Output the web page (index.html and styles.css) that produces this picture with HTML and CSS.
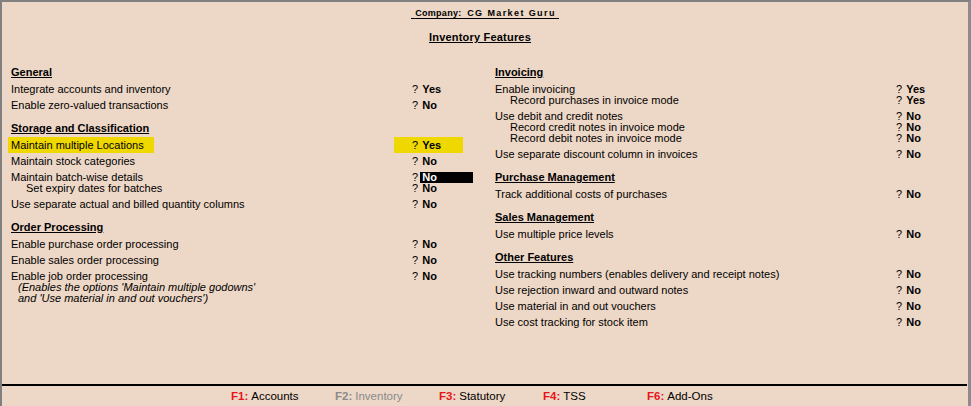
FILE: index.html
```html
<!DOCTYPE html>
<html lang="en">
<head>
    <meta charset="UTF-8">
    <title>Inventory Features</title>
    <link rel="stylesheet" href="styles.css">
</head>
<body>
    <div class="window">
        <div class="header">
            <div class="company"><span class="company-name">Company:&nbsp; <span class="company-title">CG Market Guru</span></span></div>
            <div class="title">Inventory Features</div>
        </div>

        <div class="columns">
            <div class="column">
                <div class="heading">General</div>
                <div class="row"><span class="label">Integrate accounts and inventory</span><span class="value">? <b>Yes</b></span></div>
                <div class="row"><span class="label">Enable zero-valued transactions</span><span class="value">? <b>No</b></span></div>

                <div class="heading">Storage and Classification</div>
                <div class="row"><span class="label"><span class="mark mark-label">Maintain multiple Locations</span></span><span class="value"><span class="mark mark-value">? <b>Yes</b></span></span></div>
                <div class="row"><span class="label">Maintain stock categories</span><span class="value">? <b>No</b></span></div>
                <div class="row"><span class="label">Maintain batch-wise details</span><span class="value">? <b class="current">No</b></span></div>
                <div class="row sub"><span class="label">Set expiry dates for batches</span><span class="value">? <b>No</b></span></div>
                <div class="row"><span class="label">Use separate actual and billed quantity columns</span><span class="value">? <b>No</b></span></div>

                <div class="heading">Order Processing</div>
                <div class="row"><span class="label">Enable purchase order processing</span><span class="value">? <b>No</b></span></div>
                <div class="row"><span class="label">Enable sales order processing</span><span class="value">? <b>No</b></span></div>
                <div class="row"><span class="label">Enable job order processing</span><span class="value">? <b>No</b></span></div>
                <div class="note">(Enables the options 'Maintain multiple godowns'</div>
                <div class="note">and 'Use material in and out vouchers')</div>
            </div>

            <div class="column">
                <div class="heading">Invoicing</div>
                <div class="row"><span class="label">Enable invoicing</span><span class="value">? <b>Yes</b></span></div>
                <div class="row sub"><span class="label">Record purchases in invoice mode</span><span class="value">? <b>Yes</b></span></div>
                <div class="row"><span class="label">Use debit and credit notes</span><span class="value">? <b>No</b></span></div>
                <div class="row sub"><span class="label">Record credit notes in invoice mode</span><span class="value">? <b>No</b></span></div>
                <div class="row sub"><span class="label">Record debit notes in invoice mode</span><span class="value">? <b>No</b></span></div>
                <div class="row"><span class="label">Use separate discount column in invoices</span><span class="value">? <b>No</b></span></div>

                <div class="heading">Purchase Management</div>
                <div class="row"><span class="label">Track additional costs of purchases</span><span class="value">? <b>No</b></span></div>

                <div class="heading">Sales Management</div>
                <div class="row"><span class="label">Use multiple price levels</span><span class="value">? <b>No</b></span></div>

                <div class="heading">Other Features</div>
                <div class="row"><span class="label">Use tracking numbers (enables delivery and receipt notes)</span><span class="value">? <b>No</b></span></div>
                <div class="row"><span class="label">Use rejection inward and outward notes</span><span class="value">? <b>No</b></span></div>
                <div class="row"><span class="label">Use material in and out vouchers</span><span class="value">? <b>No</b></span></div>
                <div class="row"><span class="label">Use cost tracking for stock item</span><span class="value">? <b>No</b></span></div>
            </div>
        </div>

        <div class="footer">
            <div class="key"><span class="fkey">F1:</span>Accounts</div>
            <div class="key disabled"><span class="fkey">F2:</span>Inventory</div>
            <div class="key"><span class="fkey">F3:</span>Statutory</div>
            <div class="key"><span class="fkey">F4:</span>TSS</div>
            <div class="key"><span class="fkey">F6:</span>Add-Ons</div>
        </div>
    </div>
</body>
</html>
```

FILE: styles.css
```css
html, body {
    margin: 0;
    padding: 0;
}

body {
    width: 971px;
    height: 406px;
    overflow: hidden;
    background: #edd7c6;
    color: #000;
    font-family: 'Liberation Sans', Arial, sans-serif;
    font-size: 11px;
}

.window {
    box-sizing: border-box;
    height: 406px;
    border-top: 2px solid #808080;
    border-left: 2px solid #808080;
    border-right: 3px solid #8c8c8c;
    display: flex;
    flex-direction: column;
}

.header {
    padding-top: 6px;
    text-align: center;
}

.company {
    line-height: 11px;
    font-size: 9px;
    font-weight: bold;
    letter-spacing: 0.3px;
}

.company-name {
    padding: 0 3px 0 4px;
    border-bottom: 1px solid #000;
}

.company-title {
    letter-spacing: 1.4px;
}

.title {
    margin-top: 13px;
    margin-right: 10px;
    line-height: 11px;
    font-weight: bold;
    letter-spacing: 0.2px;
    text-decoration: underline;
}

.columns {
    margin-top: 24px;
    padding-left: 9px;
    display: grid;
    grid-template-columns: 484px 1fr;
    flex: 1;
}

/* padding, not margin: the row margins would collapse into it */
.heading {
    margin-top: 12px;
    padding-bottom: 1px;
    line-height: 11px;
    font-weight: bold;
    text-decoration: underline;
}

.heading:first-child {
    margin-top: 0;
}

.row {
    margin-top: 5px;
    display: grid;
    grid-template-columns: 401px auto;
    line-height: 11px;
    white-space: nowrap;
}

.row.sub {
    margin-top: 0;
}

.row.sub .label {
    padding-left: 15px;
}

.value b {
    margin-left: 1px;
}

.note {
    padding-left: 7px;
    line-height: 11px;
    font-style: italic;
}

.mark {
    background: #efd800;
    padding-top: 2px;
    padding-bottom: 2px;
}

.mark-label {
    margin-left: -3px;
    padding-left: 3px;
    padding-right: 10px;
}

.mark-value {
    margin-left: -18px;
    padding-left: 18px;
    padding-right: 22px;
}

.value .current {
    display: inline-block;
    width: 51px;
    margin-left: -1px;
    padding-left: 2px;
    background: #000;
    color: #fff;
}

.footer {
    border-top: 2px solid #000;
    margin-right: 1px;
    height: 20px;
    padding-left: 229px;
    display: flex;
    line-height: 20px;
    font-size: 11.5px;
}

.key {
    width: 104px;
}

.fkey {
    color: #e8141c;
    font-weight: bold;
    margin-right: 3px;
}

.key.disabled,
.key.disabled .fkey {
    color: #8a8a8a;
}
```
